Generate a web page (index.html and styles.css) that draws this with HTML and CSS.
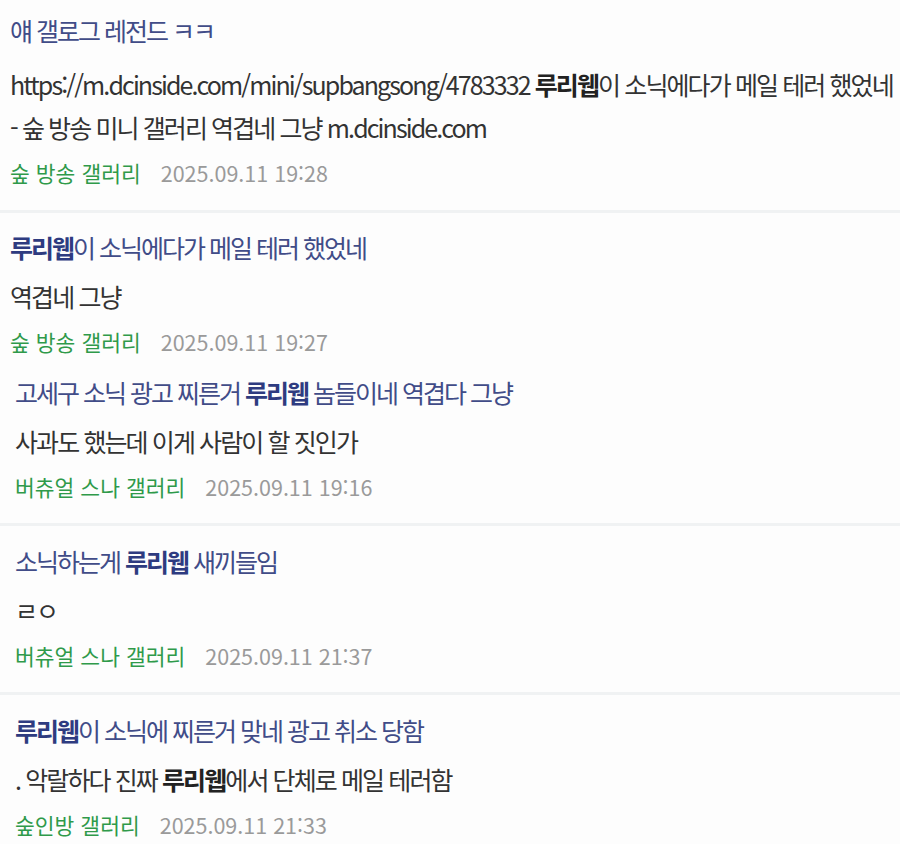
FILE: index.html
```html
<!DOCTYPE html>
<html lang="ko">
<head>
    <meta charset="UTF-8">
    <meta name="viewport" content="width=device-width, initial-scale=1.0">
    <title>검색 결과</title>
    <link rel="stylesheet" href="styles.css">
</head>
<body>
    <ul class="results">
        <li class="item first">
            <a class="title" href="#">얘 갤로그 레전드 ㅋㅋ</a>
            <p class="body">https://m.dcinside.com/mini/supbangsong/4783332 <b>루리웹</b>이 소닉에다가 메일 테러 했었네<br>- 숲 방송 미니 갤러리 역겹네 그냥 m.dcinside.com</p>
            <div class="meta"><span class="gall">숲 방송 갤러리</span><span class="date">2025.09.11 19:28</span></div>
        </li>
        <li class="item joined">
            <a class="title" href="#"><b>루리웹</b>이 소닉에다가 메일 테러 했었네</a>
            <p class="body">역겹네 그냥</p>
            <div class="meta"><span class="gall">숲 방송 갤러리</span><span class="date">2025.09.11 19:27</span></div>
        </li>
        <li class="item shift">
            <a class="title" href="#">고세구 소닉 광고 찌른거 <b>루리웹</b> 놈들이네 역겹다 그냥</a>
            <p class="body">사과도 했는데 이게 사람이 할 짓인가</p>
            <div class="meta"><span class="gall">버츄얼 스나 갤러리</span><span class="date">2025.09.11 19:16</span></div>
        </li>
        <li class="item shift">
            <a class="title" href="#">소닉하는게 <b>루리웹</b> 새끼들임</a>
            <p class="body">ㄹㅇ</p>
            <div class="meta"><span class="gall">버츄얼 스나 갤러리</span><span class="date">2025.09.11 21:37</span></div>
        </li>
        <li class="item shift">
            <a class="title" href="#"><b>루리웹</b>이 소닉에 찌른거 맞네 광고 취소 당함</a>
            <p class="body">. 악랄하다 진짜 <b>루리웹</b>에서 단체로 메일 테러함</p>
            <div class="meta"><span class="gall">숲인방 갤러리</span><span class="date">2025.09.11 21:33</span></div>
        </li>
    </ul>
</body>
</html>
```

FILE: styles.css
```css
body {
    margin: 0;
    background: #fdfdfd;
    font-family: "Noto Sans CJK KR", "Noto Sans", sans-serif;
    color: #333;
}
.results {
    list-style: none;
    margin: 0;
    padding: 0;
}
.item {
    padding: 14px 4px 22px 10px;
    border-bottom: 3px solid #f0f2f3;
}
.item.first {
    padding-top: 10px;
}
.item.joined {
    border-bottom: none;
    padding-bottom: 0;
}
.item.shift {
    padding-left: 15px;
    padding-top: 15px;
    padding-bottom: 21px;
}
.title {
    display: block;
    font-size: 25px;
    line-height: 40px;
    color: #414c88;
    text-decoration: none;
    letter-spacing: -2px;
    white-space: nowrap;
}
.title b {
    color: #2e3b80;
}
.body {
    margin: 8px 0 0;
    font-size: 25px;
    line-height: 43px;
    color: #333;
    letter-spacing: -1.9px;
    white-space: nowrap;
}
.first .body {
    margin-top: 13px;
}
.body b {
    color: #222;
}
.meta {
    margin-top: 9px;
    font-size: 21.5px;
    line-height: 30px;
}
.gall {
    color: #2f9a4a;
    margin-right: 20px;
}
.date {
    color: #9a9a9a;
}
```
